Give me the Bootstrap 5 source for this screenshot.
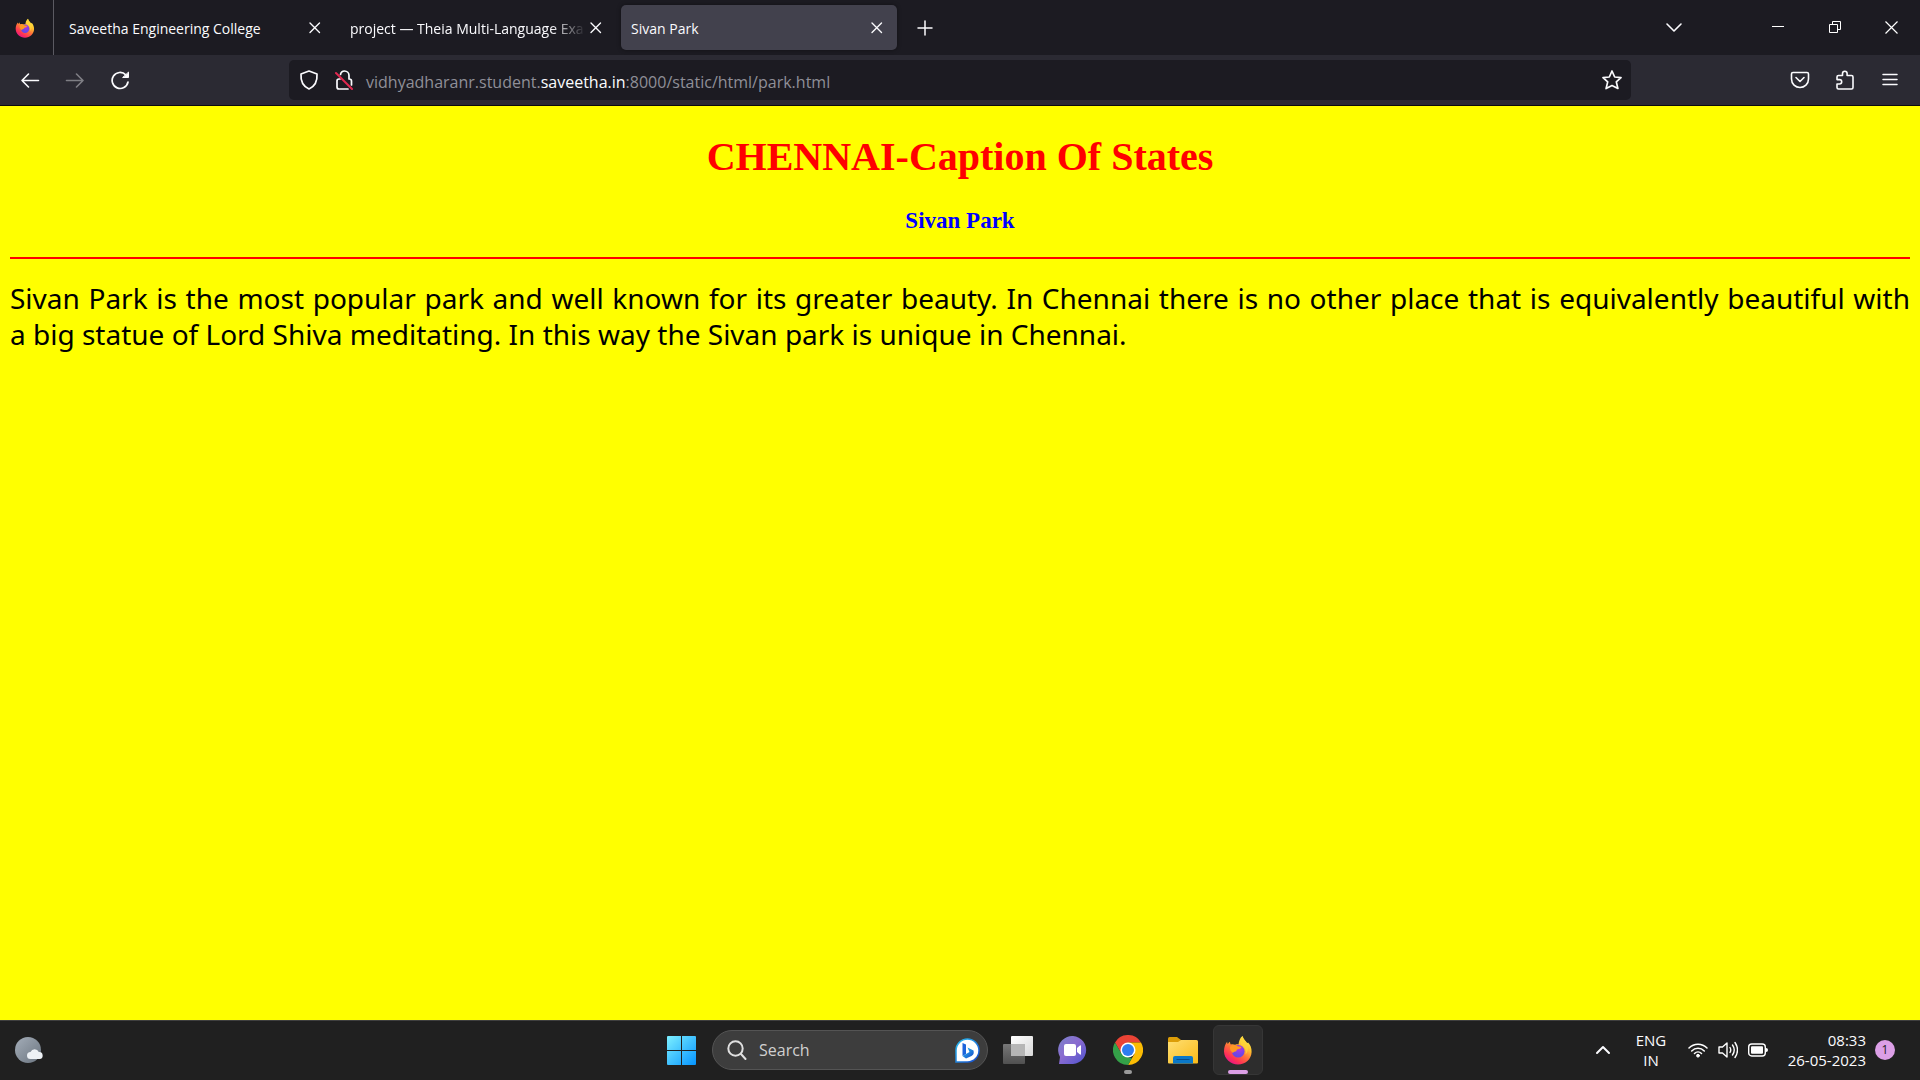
<!DOCTYPE html>
<html lang="en">
<head>
<meta charset="utf-8">
<meta name="viewport" content="width=device-width, initial-scale=1">
<title>Sivan Park</title>
<link href="https://cdn.jsdelivr.net/npm/bootstrap@5.3.0/dist/css/bootstrap.min.css" rel="stylesheet">
<style>
  body { font-family: "Open Sans", "Noto Sans", sans-serif; background: #ff0; color: #fbfbfe; }
  svg { display: block; flex: none; }
  .stroke-icon { fill: none; stroke: #fbfbfe; stroke-width: 2; stroke-linecap: round; stroke-linejoin: round; }
  .plain-btn { background: none; border: 0; padding: 0; color: inherit; display: flex; align-items: center; justify-content: center; flex: none; }

  /* browser tab strip */
  .tab-strip { background: #1c1b22; height: 55px; }
  .pinned-tab { width: 54px; border-right: 1px solid #5b5a62; padding-left: 15px; }
  .tab-list { gap: 5px; padding: 5px; }
  .browser-tab { width: 276px; height: 45px; padding: 0 10px; border-radius: 5px; font-size: 14px; line-height: 20px; }
  .browser-tab a { color: #fbfbfe; text-decoration: none; white-space: nowrap; flex: 1 1 0; min-width: 0; padding-top: 2px; }
  .browser-tab.is-current { background: #42414d; box-shadow: 0 0 4px #0006; }
  .fade-end { -webkit-mask-image: linear-gradient(to left, transparent, #000 35px); mask-image: linear-gradient(to left, transparent, #000 35px); }
  .tab-close { width: 20px; height: 20px; }
  .new-tab { width: 45px; height: 45px; }
  .window-btn { width: 57px; height: 54px; }
  .list-tabs { width: 44px; margin-right: 53px; }

  /* address row */
  .nav-row { background: #2b2a33; height: 51px; border-bottom: 1px solid #0c0c0d; }
  .nav-buttons, .nav-tools { width: 289px; }
  .nav-buttons { padding-left: 7px; }
  .nav-tools { padding-right: 8px; }
  .nav-btn { width: 45px; height: 40px; }
  .address-box { background: #1c1b22; height: 40px; border-radius: 5px; padding: 0 2px; }
  .address-btn { width: 35px; height: 36px; }
  .address-text { font-size: 16px; line-height: 24px; color: #8f8f98; padding: 4px 0 0 5px; white-space: nowrap; }
  .address-text b { color: #fbfbfe; font-weight: 400; }

  /* document */
  .park-page { padding: 0 10px; color: #000; }
  .park-title { font: bold 40px/46px "Liberation Serif", serif; color: #f00; margin: 28px 0; }
  .park-name { font: bold 23px/26px "Liberation Serif", serif; color: #00f; margin: 0 0 23px; }
  .park-rule { border: 0; border-top: 2px solid #f00; opacity: 1; margin: 0 0 21px; }
  .park-text { font: 28px/36px "Noto Sans", sans-serif; text-align: justify; margin: 0; }

  /* taskbar */
  .task-bar { background: #202020; height: 60px; box-shadow: inset 0 1px #3f3f3f; display: grid; grid-template-columns: 1fr auto 1fr; }
  .task-apps { gap: 5px; }
  .task-slot { width: 50px; height: 50px; border-radius: 6px; position: relative; }
  .task-slot.is-active { background: #2d2d2d; border: 1px solid #363636; }
  .run-mark { position: absolute; bottom: 1px; width: 8px; height: 4px; border-radius: 2px; background: #9a9a9a; }
  .is-active .run-mark { bottom: 0; width: 20px; background: #dc9fe6; }
  .search-pill { width: 276px; height: 40px; border-radius: 20px; background: #3d3d3d; border: 1px solid #545454; padding: 0 7px 0 14px; gap: 12px; }
  .search-pill input { background: none; border: 0; outline: 0; padding: 0; flex: 1 1 0; min-width: 0; color: #d0d0d0; font-size: 16px; line-height: 24px; }
  .search-pill input::placeholder { color: #d0d0d0; opacity: 1; }
  .weather-btn { margin-left: 14px; }
  .tray { font-size: 15px; line-height: 20px; padding-right: 25px; }
  .tray-lang { width: 60px; text-align: center; margin-left: 10px; }
  .tray-status { gap: 10px; margin-left: 7px; }
  .tray-clock { text-align: right; width: 98px; }
  .count-dot { width: 20px; height: 20px; border-radius: 50%; background: #dc9fe6; color: #222; font-size: 12px; line-height: 20px; margin-left: 9px; }
</style>
<script src="https://cdn.jsdelivr.net/npm/bootstrap@5.3.0/dist/js/bootstrap.bundle.min.js"></script>
</head>
<body class="d-flex flex-column min-vh-100">

<svg width="0" height="0" class="position-absolute" aria-hidden="true">
  <defs>
    <linearGradient id="ffFlame" x1=".85" y1=".05" x2=".25" y2="1">
      <stop offset="0" stop-color="#fff44f"/><stop offset=".3" stop-color="#ffc42e"/><stop offset=".55" stop-color="#ff7139"/><stop offset=".8" stop-color="#ff3156"/><stop offset="1" stop-color="#e3128c"/>
    </linearGradient>
    <radialGradient id="ffGlobe" cx=".6" cy=".3" r=".8">
      <stop offset="0" stop-color="#b833e1"/><stop offset=".5" stop-color="#7a42e8"/><stop offset="1" stop-color="#5b4be0"/>
    </radialGradient>
    <linearGradient id="winBlue" gradientUnits="userSpaceOnUse" x1="0" y1="0" x2="29" y2="29"><stop offset="0" stop-color="#7df0ff"/><stop offset="1" stop-color="#0594ff"/></linearGradient>
    <linearGradient id="chatFill" x1="0" y1="0" x2="1" y2="1"><stop offset="0" stop-color="#7b83c9"/><stop offset=".45" stop-color="#8a6bd0"/><stop offset="1" stop-color="#4e53cf"/></linearGradient>
    <linearGradient id="folderFill" x1="0" y1="0" x2="1" y2="1"><stop offset="0" stop-color="#ffdf73"/><stop offset="1" stop-color="#f9ba18"/></linearGradient>
    <linearGradient id="bingBlue" x1="0" y1="0" x2="1" y2="1"><stop offset="0" stop-color="#29c1f2"/><stop offset="1" stop-color="#1746c8"/></linearGradient>
    <linearGradient id="moonFill" x1="0" y1="0" x2="1" y2="1"><stop offset="0" stop-color="#a4adb8"/><stop offset="1" stop-color="#6b7580"/></linearGradient>
    <linearGradient id="paneFill" x1="0" y1="0" x2="1" y2="1"><stop offset="0" stop-color="#fff"/><stop offset="1" stop-color="#d8d8d8"/></linearGradient>
    <linearGradient id="paneDark" x1="0" y1="0" x2="0" y2="1"><stop offset="0" stop-color="#777"/><stop offset="1" stop-color="#505050"/></linearGradient>
    <symbol id="fox" viewBox="0 0 30 30">
      <path fill="url(#ffFlame)" d="M19.500 1c.8 3.100 3 4.800 4.500 6.700c.7.6.9.4.9-.5 2.400 2.300 3.900 6 3.700 9.800C28.300 24.300 22.400 29.500 15 29.500S1.300 24 1 16.600C.9 12 2.400 8.900 4.100 6.700c.1 1 .3 1.700.7 2.200C5.600 7.800 6.200 7.200 7 6.700c-.1 1.100.2 2 .8 2.800 1.400-.5 3-.4 4.300.2 1-.3 2.400-.5 3.400-.3C16 6.200 16.600 3.400 19.500 1z"/>
      <circle cx="15.200" cy="16.200" r="6.300" fill="url(#ffGlobe)"/>
      <path fill="#ff9823" d="M7 12c2-2.500 5.300-2.700 7.800-.8 1.300.2 2.600.2 3.700.9-.5 1.600-2.300 2-4.200 2.500-.8.3-.8 1-.9 1.600-1.500.2-2.600.7-3.500 1.800C8 16.500 6.600 14.700 7 12z"/>
      <path fill="#ffd43a" opacity=".75" d="M19.500 1c.8 3.300 3.300 5.200 4.700 8.200 1.500 3.500.9 7.700-1.700 10.400.7-3.600-.2-7-3-9C16.500 8.500 16.800 4 19.500 1z"/>
    </symbol>
    <symbol id="cross" viewBox="0 0 20 20"><path d="M5 5l9.500 9.500M14.500 5L5 14.500" fill="none" stroke="#fbfbfe" stroke-width="1.400" stroke-linecap="round"/></symbol>
  </defs>
</svg>

<header>
  <div class="tab-strip d-flex align-items-stretch">
    <div class="pinned-tab d-flex align-items-center"><svg width="20" height="20"><use href="#fox"/></svg></div>
    <div class="tab-list d-flex">
      <div class="browser-tab d-flex align-items-center"><a href="#">Saveetha Engineering College</a><button class="plain-btn tab-close" aria-label="Close tab"><svg width="20" height="20"><use href="#cross"/></svg></button></div>
      <div class="browser-tab d-flex align-items-center"><a href="#" class="fade-end">project — Theia Multi-Language Exa</a><button class="plain-btn tab-close" aria-label="Close tab"><svg width="20" height="20"><use href="#cross"/></svg></button></div>
      <div class="browser-tab is-current d-flex align-items-center"><a href="#">Sivan Park</a><button class="plain-btn tab-close" aria-label="Close tab"><svg width="20" height="20"><use href="#cross"/></svg></button></div>
      <button class="plain-btn new-tab" aria-label="New tab"><svg class="stroke-icon" width="20" height="20" viewBox="0 0 20 20"><path stroke-width="1.500" d="M10 3v14M3 10h14"/></svg></button>
    </div>
    <div class="d-flex ms-auto">
      <button class="plain-btn list-tabs" aria-label="List all tabs"><svg class="stroke-icon" width="20" height="20" viewBox="0 0 20 20"><path stroke-width="1.600" d="M3 6l7 7 7-7"/></svg></button>
      <button class="plain-btn window-btn" aria-label="Minimise"><svg width="12" height="12"><path d="M0 5.500h12" stroke="#fff"/></svg></button>
      <button class="plain-btn window-btn" aria-label="Restore"><svg width="12" height="12" fill="none" stroke="#fff"><path d="M.5 3.500h8v8h-8zM3.500 3.500v-3h8v8h-3"/></svg></button>
      <button class="plain-btn window-btn" aria-label="Close"><svg width="13" height="13"><path d="M.5.5l12 12M12.500.5l-12 12" stroke="#fff" stroke-width="1.200"/></svg></button>
    </div>
  </div>

  <div class="nav-row d-flex align-items-center">
    <nav class="nav-buttons d-flex flex-shrink-0">
      <button class="plain-btn nav-btn" aria-label="Back"><svg class="stroke-icon" width="20" height="20" viewBox="0 0 20 20"><path stroke-width="1.600" d="M18.500 10.500H2M8.500 4L2 10.500 8.500 17"/></svg></button>
      <button class="plain-btn nav-btn" aria-label="Forward"><svg class="stroke-icon" width="20" height="20" viewBox="0 0 20 20" opacity=".4"><path stroke-width="1.600" d="M1.500 10.500H18M11.500 4l6.500 6.500L11.500 17"/></svg></button>
      <button class="plain-btn nav-btn" aria-label="Reload"><svg class="stroke-icon" width="20" height="20" viewBox="0 0 20 20"><path stroke-width="1.700" d="M18 12a8 8 0 1 1-2.200-7.200"/><path fill="#fbfbfe" stroke-width="1" d="M18.500 2.500v5H13z"/></svg></button>
    </nav>
    <div class="address-box d-flex align-items-center flex-grow-1">
      <button class="plain-btn address-btn" aria-label="Tracking protection"><svg class="stroke-icon" width="20" height="20" viewBox="0 0 20 20"><path stroke-width="1.700" d="M10 1l8 3c.5 7-2.500 12.500-8 15C4.500 16.500 1.500 11 2 4z"/></svg></button>
      <button class="plain-btn address-btn" aria-label="Connection not secure"><svg class="stroke-icon" width="20" height="20" viewBox="0 0 20 20"><path stroke-width="1.700" d="M6.500 4.500C7 2.300 8.500 1 10.500 1 13 1 15 3 15 5.500V9q2.500 0 2.500 2v4M14 19H5q-2 0-2-2v-6q0-2 2-2h1"/><path stroke="#e22850" d="M2 3l16 16"/></svg></button>
      <div class="address-text flex-grow-1">vidhyadharanr.student.<b>saveetha.in</b>:8000/static/html/park.html</div>
      <button class="plain-btn address-btn" aria-label="Bookmark"><svg class="stroke-icon" width="20" height="20" viewBox="0 0 20 20"><path stroke-width="1.700" d="M10 1l2.700 6 6.300.6-4.700 4.300 1.600 6.600L10 15.500l-5.900 3 1.600-6.600L1 7.600 7.300 7z"/></svg></button>
    </div>
    <div class="nav-tools d-flex justify-content-end flex-shrink-0">
      <button class="plain-btn nav-btn" aria-label="Pocket"><svg class="stroke-icon" width="20" height="20" viewBox="0 0 20 20"><path stroke-width="1.600" d="M3 2.500h14q1.500 0 1.500 1.500v5c0 5-4 8.500-8.500 8.500S1.500 14 1.500 9V4Q1.500 2.500 3 2.500zM6 7.500l4 4 4-4"/></svg></button>
      <button class="plain-btn nav-btn" aria-label="Extensions"><svg class="stroke-icon" width="20" height="20" viewBox="0 0 20 20"><path stroke-width="1.600" d="M2 7q0-1.500 1.500-1.500h4V3.500a2.300 2.300 0 0 1 4.600 0v2H16.500q1.500 0 1.500 1.500v10.500q0 1.500-1.500 1.500H3.500q-1.500 0-1.500-1.500V14h2.500a2.200 2.200 0 0 0 0-4.400H2z"/></svg></button>
      <button class="plain-btn nav-btn" aria-label="Menu"><svg class="stroke-icon" width="16" height="20" viewBox="0 0 16 20"><path stroke-width="1.500" d="M1 4.500h14M1 9.500h14M1 14.500h14"/></svg></button>
    </div>
  </div>
</header>

<main class="park-page flex-grow-1">
  <h1 class="park-title text-center">CHENNAI-Caption Of States</h1>
  <h3 class="park-name text-center">Sivan Park</h3>
  <hr class="park-rule">
  <p class="park-text">Sivan Park is the most popular park and well known for its greater beauty. In Chennai there is no other place that is equivalently beautiful with a&nbsp;big statue of Lord Shiva meditating. In this way the Sivan park is unique in Chennai.</p>
</main>

<footer class="task-bar align-items-center">
  <button class="plain-btn weather-btn justify-content-start" aria-label="Weather"><svg width="30" height="28" viewBox="0 0 30 28"><circle cx="14" cy="14" r="13" fill="url(#moonFill)"/><path fill="#edf1f5" d="M16.500 23a3.500 3.500 0 0 1 0-7 4.500 4.500 0 0 1 8.300 0 3.500 3.500 0 0 1 .7 7z"/></svg></button>
  <div class="task-apps d-flex align-items-center">
    <button class="plain-btn task-slot" aria-label="Start"><svg width="30" height="29" fill="url(#winBlue)"><path d="M1 0h13v14H0V1q0-1 1-1zM15 0h13q1 0 1 1v13H15zM0 15h14v14H1q-1 0-1-1zM15 15h14v13q0 1-1 1H15z"/></svg></button>
    <label class="search-pill d-flex align-items-center">
      <svg width="20" height="20" viewBox="0 0 20 20" fill="none" stroke="#e0e0e0" stroke-width="2" stroke-linecap="round"><circle cx="8.500" cy="8.500" r="7.200"/><path d="M14 14l4.500 5"/></svg>
      <input type="text" placeholder="Search" aria-label="Search">
      <svg width="25" height="25" viewBox="0 0 25 25"><path fill="#fff" stroke="url(#bingBlue)" stroke-width="1.500" d="M1 24V12.500A11.500 11.500 0 1 1 12.500 24z"/><path fill="#1c64dc" d="M7.500 5l3.500 1.500v9.500L7.500 18z"/><path fill="url(#bingBlue)" d="M12.500 9.500l6 3q1 4-2 5.500L11 20.500l-3.500-2.500 7-4z"/></svg>
    </label>
    <button class="plain-btn task-slot" aria-label="Task view"><svg width="30" height="28"><rect x="8" width="22" height="20" rx="1" fill="url(#paneFill)"/><rect y="8" width="22" height="20" rx="1" fill="url(#paneDark)"/><path fill="#b6b6b6" d="M8 8h14v12H8z"/></svg></button>
    <button class="plain-btn task-slot" aria-label="Chat"><svg width="30" height="28" viewBox="0 0 30 28"><path fill="url(#chatFill)" d="M1 28l1-7A14 14 0 1 1 15 28z"/><rect x="6" y="8" width="12" height="12" rx="2" fill="#fff"/><path fill="#fff" d="M19 12l3-2.500q1-.5 1 .5v8q0 1-1 .5L19 16z"/></svg></button>
    <button class="plain-btn task-slot" aria-label="Chrome"><svg width="30" height="30" viewBox="0 0 30 30"><path fill="#ea4335" d="M2 7.500a15 15 0 0 1 26 0H15L8.500 18.700z"/><path fill="#fbbc04" d="M28 7.500A15 15 0 0 1 15 30l6.500-11.200L15 7.500z"/><path fill="#34a048" d="M15 30A15 15 0 0 1 2 7.500l6.500 11.300L15 22.500l4 .5z"/><circle cx="15" cy="15" r="7.500" fill="#fff"/><circle cx="15" cy="15" r="6" fill="#2f7df0"/></svg><span class="run-mark"></span></button>
    <button class="plain-btn task-slot" aria-label="File Explorer"><svg width="30" height="27" viewBox="0 0 30 27"><path fill="#dc9d08" d="M0 1.500Q0 0 1.500 0H9l4 3-1 4H0z"/><path fill="url(#folderFill)" d="M0 5h10l3-2h15.500Q30 3 30 4.500v21q0 1-1 1H1q-1 0-1-1z"/><path fill="#0a78c8" d="M5 26.500V21q0-2 2-2h16q2 0 2 2v5.500z"/><path stroke="#074d8c" d="M8.500 22.500h13"/></svg></button>
    <button class="plain-btn task-slot is-active" aria-label="Firefox"><svg width="30" height="30"><use href="#fox"/></svg><span class="run-mark"></span></button>
  </div>
  <div class="tray d-flex align-items-center justify-content-end">
    <button class="plain-btn" aria-label="Show hidden icons"><svg class="stroke-icon" width="16" height="10" viewBox="0 0 16 10"><path d="M2 8l6-6 6 6"/></svg></button>
    <div class="tray-lang">ENG<br>IN</div>
    <div class="tray-status d-flex align-items-center">
      <svg width="20" height="16" viewBox="0 0 20 16" fill="none" stroke="#fff" stroke-width="1.500" stroke-linecap="round"><path d="M1 6a12.500 12.500 0 0 1 18 0M3.700 9a8.800 8.800 0 0 1 12.600 0M6.500 11.500a5 5 0 0 1 7 0"/><circle cx="10" cy="13.700" r="1.400" fill="#fff" stroke-width="1"/></svg>
      <svg width="20" height="18" viewBox="0 0 20 18" fill="none" stroke="#fff" stroke-width="1.400" stroke-linecap="round" stroke-linejoin="round"><path d="M1 6h3.500L9 2v14l-4.500-4H1zM12 6.500q1.500 2.500 0 5M14.500 4q3.500 5 0 10M17 1.500q5 7.500 0 15"/></svg>
      <svg width="20" height="14" viewBox="0 0 20 14"><rect x=".7" y="1" width="16.600" height="12" rx="3" fill="none" stroke="#fff" stroke-width="1.400"/><rect x="3" y="3.200" width="12" height="7.600" rx="1" fill="#fff"/><path fill="#fff" d="M18 5q2 0 2 2t-2 2z"/></svg>
    </div>
    <div class="tray-clock">08:33<br>26-05-2023</div>
    <div class="count-dot text-center">1</div>
  </div>
</footer>
</body>
</html>
